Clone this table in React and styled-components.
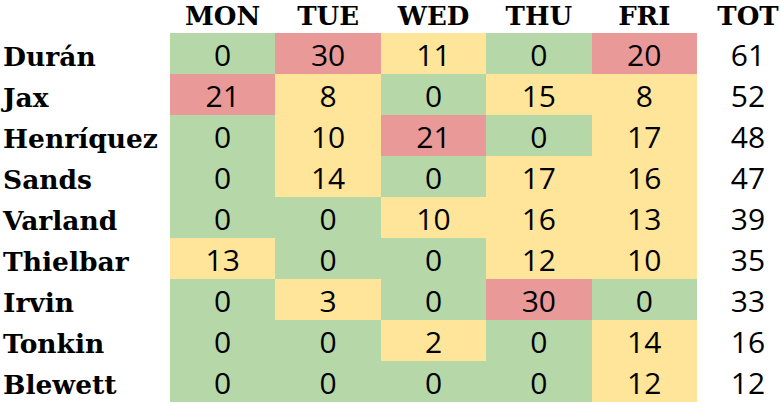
import React from "react";
import styled, { createGlobalStyle } from "styled-components";

const Global = createGlobalStyle`
  html, body { margin: 0; padding: 0; background: #ffffff; }
  body { overflow: hidden; }
`;

const days = ["MON", "TUE", "WED", "THU", "FRI"];

const rows = [
  ["Durán", [0, 30, 11, 0, 20]],
  ["Jax", [21, 8, 0, 15, 8]],
  ["Henríquez", [0, 10, 21, 0, 17]],
  ["Sands", [0, 14, 0, 17, 16]],
  ["Varland", [0, 0, 10, 16, 13]],
  ["Thielbar", [13, 0, 0, 12, 10]],
  ["Irvin", [0, 3, 0, 30, 0]],
  ["Tonkin", [0, 0, 2, 0, 14]],
  ["Blewett", [0, 0, 0, 0, 12]],
];

const colors = { low: "#b6d7a8", mid: "#ffe599", high: "#ea9999" };
const level = (v) => (v === 0 ? "low" : v >= 20 ? "high" : "mid");

const Table = styled.div`
  display: grid;
  grid-template-columns: 170px repeat(5, 105.4px) 84px;
  grid-template-rows: 33px repeat(9, 41px);
  width: 781px;
`;

const HeadCell = styled.div`
  font-family: "DejaVu Serif", serif;
  font-weight: 700;
  font-size: 26px;
  line-height: 33px;
  color: #000;
  text-align: center;
  padding-left: ${(p) => (p.$total ? "18px" : "0")};
`;

const NameCell = styled.div`
  font-family: "DejaVu Serif", serif;
  font-weight: 700;
  font-size: 26.5px;
  line-height: 41px;
  padding: 3px 0 0 3px;
  box-sizing: border-box;
  color: #000;
  white-space: nowrap;
`;

const ValueCell = styled.div`
  font-family: "Open Sans", sans-serif;
  font-size: 30px;
  line-height: 41px;
  padding-top: 1px;
  box-sizing: border-box;
  text-align: center;
  color: #000;
  background: ${(p) => colors[p.$level]};
`;

const TotalCell = styled(ValueCell)`
  background: transparent;
  padding-left: 18px;
`;

export default function App() {
  return (
    <>
      <Global />
      <Table>
        <div />
        {days.map((d) => (
          <HeadCell key={d}>{d}</HeadCell>
        ))}
        <HeadCell $total>TOT</HeadCell>
        {rows.map(([name, vals]) => (
          <React.Fragment key={name}>
            <NameCell>{name}</NameCell>
            {vals.map((v, i) => (
              <ValueCell key={i} $level={level(v)}>
                {v}
              </ValueCell>
            ))}
            <TotalCell>{vals.reduce((a, b) => a + b, 0)}</TotalCell>
          </React.Fragment>
        ))}
      </Table>
    </>
  );
}
